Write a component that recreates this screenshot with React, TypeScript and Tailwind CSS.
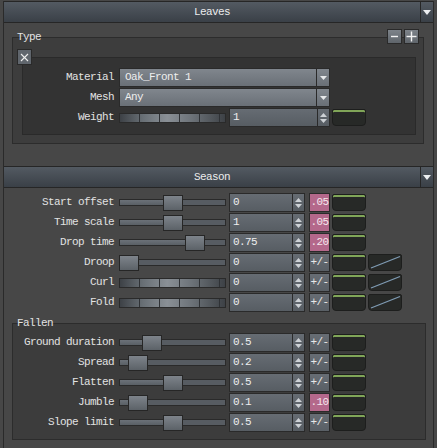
import type { ReactNode } from 'react';

type SeasonRow = {
  label: string;
  value: string;
  pos?: number;
  ramp?: boolean;
  tag?: string;
  curve?: boolean;
};

const SEASON: SeasonRow[] = [
  { label: 'Start offset', pos: 44, value: '0', tag: '.05' },
  { label: 'Time scale', pos: 44, value: '1', tag: '.05' },
  { label: 'Drop time', pos: 66, value: '0.75', tag: '.20' },
  { label: 'Droop', pos: 0, value: '0', curve: true },
  { label: 'Curl', ramp: true, value: '0', curve: true },
  { label: 'Fold', ramp: true, value: '0', curve: true },
];

const FALLEN: SeasonRow[] = [
  { label: 'Ground duration', pos: 23, value: '0.5' },
  { label: 'Spread', pos: 9, value: '0.2' },
  { label: 'Flatten', pos: 44, value: '0.5' },
  { label: 'Jumble', pos: 9, value: '0.1', tag: '.10' },
  { label: 'Slope limit', pos: 44, value: '0.5' },
];

function Tri({ down = true, w = 7, h = 4, color = '#e2e5e8' }: { down?: boolean; w?: number; h?: number; color?: string }) {
  return (
    <svg width={w} height={h} className="block">
      <polygon points={down ? `0,0 ${w},0 ${w / 2},${h}` : `0,${h} ${w},${h} ${w / 2},0`} fill={color} />
    </svg>
  );
}

function Header({ title }: { title: string }) {
  return (
    <div className="flex h-[22px] border-y border-[#262626] bg-gradient-to-b from-[#535a62] to-[#3a4047]">
      <div className="flex-1 text-center leading-[20px] text-[#ececec]">{title}</div>
      <div className="flex w-[13px] items-center justify-center border-l border-[#262626]">
        <Tri w={8} h={5} color="#eceef0" />
      </div>
    </div>
  );
}

function Row({ label, labelW, children }: { label: string; labelW: string; children: ReactNode }) {
  return (
    <div className="flex h-[19px] items-center">
      <div className={`${labelW} shrink-0 whitespace-nowrap text-right leading-[19px]`}>{label}</div>
      <div className="ml-[5px] flex items-center">{children}</div>
    </div>
  );
}

function Slider({ pos }: { pos: number }) {
  return (
    <div className="flex h-[16px] w-[107px] items-center">
      {pos > 0 && (
        <div
          className="h-[7px] shrink-0 border border-r-0 border-[#2a2a2a] bg-gradient-to-b from-[#6b7178] to-[#5a6066]"
          style={{ width: pos }}
        />
      )}
      <div className="h-[16px] w-[20px] shrink-0 border border-[#262626] bg-gradient-to-b from-[#7e848b] to-[#5c6268]" />
      <div className="h-[7px] flex-1 border border-l-0 border-[#2a2a2a] bg-[#575c62]" />
    </div>
  );
}

function Ramp() {
  return (
    <div className="flex h-[10px] w-[107px] border border-[#2a2a2a] bg-[linear-gradient(to_right,#3d4146,#697076_22%,#8a9096_45%,#6d7379_68%,#50555a_88%,#3d4146)]">
      {[0, 1, 2, 3, 4].map((i) => (
        <div key={i} className="w-[20px] border-r border-[#2f3236]" />
      ))}
    </div>
  );
}

function SpinBox({ value, w }: { value: string; w: string }) {
  return (
    <div className={`${w} flex h-[19px] border border-[#2a2a2a] bg-gradient-to-b from-[#666c73] to-[#575d63]`}>
      <div className="flex-1 pl-[3px] leading-[17px] text-[#eeeeee]">{value}</div>
      <div className="flex w-[12px] flex-col items-center justify-center gap-[2px] border-l border-[#2a2a2a]">
        <Tri down={false} w={7} h={4} color="#cdd1d5" />
        <Tri w={7} h={4} color="#cdd1d5" />
      </div>
    </div>
  );
}

function Combo({ text }: { text: string }) {
  return (
    <div className="flex h-[19px] w-[211px] border border-[#2a2a2a] bg-gradient-to-b from-[#80868d] to-[#6a7077]">
      <div className="flex-1 pl-[5px] leading-[17px] text-[#eeeeee]">{text}</div>
      <div className="flex w-[13px] items-center justify-center border-l border-[#2a2a2a]">
        <Tri w={7} h={4} color="#e6e8ea" />
      </div>
    </div>
  );
}

function Tag({ text }: { text?: string }) {
  if (text) {
    return (
      <div className="ml-[4px] h-[19px] w-[21px] border border-[#2a2a2a] bg-[#b4688b] text-center leading-[17px] text-[#f4e6ec]">
        {text}
      </div>
    );
  }
  return (
    <div className="ml-[4px] h-[19px] w-[21px] border border-[#2a2a2a] bg-gradient-to-b from-[#676d74] to-[#595f65] text-center leading-[17px] text-[#e8e8e8]">
      +/-
    </div>
  );
}

function Green() {
  return (
    <div className="ml-[2px] h-[17px] w-[34px] rounded-[2px] rounded-b-[4px] border border-[#1d1e1d] bg-[#272927] shadow-[inset_0_2px_0_#80a558]" />
  );
}

function Curve() {
  return (
    <div className="ml-[2px] h-[17px] w-[34px] rounded-[2px] rounded-b-[4px] border border-[#1d1e1d] bg-[#272927]">
      <svg width="32" height="15" className="block">
        <line x1="2" y1="13" x2="31" y2="1.5" stroke="#7f9bb3" strokeWidth="1.3" />
      </svg>
    </div>
  );
}

function ValueRow({ row, labelW }: { row: SeasonRow; labelW: string }) {
  return (
    <Row label={row.label} labelW={labelW}>
      {row.ramp ? <Ramp /> : <Slider pos={row.pos ?? 0} />}
      <div className="ml-[3px]">
        <SpinBox value={row.value} w="w-[76px]" />
      </div>
      <Tag text={row.tag} />
      <Green />
      {row.curve && <Curve />}
    </Row>
  );
}

function SmallButton({ children, className }: { children: ReactNode; className: string }) {
  return (
    <div
      className={`${className} absolute flex h-[15px] w-[15px] items-center justify-center border border-[#2a2a2a] bg-gradient-to-b from-[#7d838a] to-[#5f656b]`}
    >
      {children}
    </div>
  );
}

export default function App() {
  return (
    <div className="h-[448px] w-[437px] overflow-hidden bg-[#474747] pt-[1px] font-['Liberation_Mono',monospace] text-[11px] tracking-[-0.6px] text-[#e2e2e2] select-none">
      <div className="ml-[3px] h-[460px] w-[431px] border-x border-[#2a2a2a]">
        <Header title="Leaves" />

        <div className="relative ml-[8px] mt-[14px] h-[107px] w-[412px] border border-[#2c2c2c] bg-[#3d3d3d] pl-[9px] pt-[19px]">
          <span className="absolute -top-[7px] left-[4px] leading-[12px]">Type</span>
          <SmallButton className="-top-[9px] left-[374px]">
            <svg width="9" height="9">
              <line x1="1" y1="4.5" x2="8" y2="4.5" stroke="#f2f2f2" strokeWidth="1.4" />
            </svg>
          </SmallButton>
          <SmallButton className="-top-[9px] left-[391px]">
            <svg width="11" height="11">
              <line x1="0.5" y1="5.5" x2="10.5" y2="5.5" stroke="#f2f2f2" strokeWidth="1.4" />
              <line x1="5.5" y1="0.5" x2="5.5" y2="10.5" stroke="#f2f2f2" strokeWidth="1.4" />
            </svg>
          </SmallButton>
          <div className="absolute left-[4px] top-[11px] z-10 flex h-[16px] w-[15px] items-center justify-center border border-[#2a2a2a] bg-[#60666d]">
            <svg width="9" height="9">
              <line x1="1" y1="1" x2="8" y2="8" stroke="#eeeeee" strokeWidth="1.1" />
              <line x1="8" y1="1" x2="1" y2="8" stroke="#eeeeee" strokeWidth="1.1" />
            </svg>
          </div>

          <div className="flex h-[78px] w-[394px] flex-col gap-[1px] border border-[#2a2a2a] bg-[#333333] pt-[10px]">
            <Row label="Material" labelW="w-[91px]">
              <Combo text="Oak_Front 1" />
            </Row>
            <Row label="Mesh" labelW="w-[91px]">
              <Combo text="Any" />
            </Row>
            <Row label="Weight" labelW="w-[91px]">
              <Ramp />
              <div className="ml-[3px]">
                <SpinBox value="1" w="w-[101px]" />
              </div>
              <Green />
            </Row>
          </div>
        </div>

        <div className="mt-[22px]">
          <Header title="Season" />
        </div>

        <div className="mt-[5px] flex flex-col gap-[1px]">
          {SEASON.map((row) => (
            <ValueRow key={row.label} row={row} labelW="w-[110px]" />
          ))}
        </div>

        <div className="relative ml-[8px] mt-[11px] flex h-[117px] w-[414px] flex-col gap-[1px] border border-[#2c2c2c] bg-[#3c3c3c] pt-[9px]">
          <span className="absolute -top-[7px] left-[4px] leading-[12px]">Fallen</span>
          {FALLEN.map((row) => (
            <ValueRow key={row.label} row={row} labelW="w-[101px]" />
          ))}
        </div>
      </div>
    </div>
  );
}
